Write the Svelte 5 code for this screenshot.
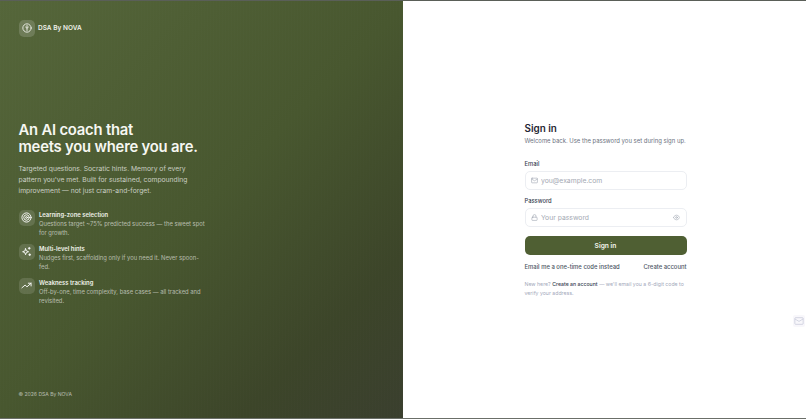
<script lang="ts">
    const features = [
        {
            title: "Learning-zone selection",
            text: "Questions target ~75% predicted success — the sweet spot for growth.",
            icon: "target"
        },
        {
            title: "Multi-level hints",
            text: "Nudges first, scaffolding only if you need it. Never spoon-fed.",
            icon: "sparkles"
        },
        {
            title: "Weakness tracking",
            text: "Off-by-one, time complexity, base cases — all tracked and revisited.",
            icon: "trend"
        }
    ];
</script>

<div class="page">
    <aside class="hero">
        <div class="brand">
            <span class="brand-icon">
                <svg viewBox="0 0 24 24" width="10" height="10" fill="none" stroke="currentColor" stroke-width="2.2" stroke-linecap="round">
                    <circle cx="12" cy="12" r="10" />
                    <path d="M12 6v12M9 9.5c0 2 1.5 2.5 3 2.5s3-.5 3-2.5" />
                </svg>
            </span>
            <span>DSA By NOVA</span>
        </div>

        <div class="pitch">
            <h1>An AI coach that<br />meets you where you are.</h1>
            <p class="lead">Targeted questions. Socratic hints. Memory of every pattern you've met. Built for sustained, compounding improvement — not just cram-and-forget.</p>
            <ul>
                {#each features as f}
                    <li>
                        <span class="feature-icon">
                            <svg viewBox="0 0 24 24" width="11" height="11" fill="none" stroke="currentColor" stroke-width="2" stroke-linecap="round" stroke-linejoin="round">
                                {#if f.icon === "target"}
                                    <circle cx="12" cy="12" r="10" />
                                    <circle cx="12" cy="12" r="6" />
                                    <circle cx="12" cy="12" r="2" />
                                {:else if f.icon === "sparkles"}
                                    <path d="M10 6l1.8 4.7L16.5 12.5l-4.7 1.8L10 19l-1.8-4.7L3.5 12.5l4.7-1.8z" />
                                    <path d="M18 3v4M16 5h4M19 17v4M17 19h4" />
                                {:else}
                                    <path d="M2 17l7-6 4 4 9-8" />
                                    <path d="M16 7h6v6" />
                                {/if}
                            </svg>
                        </span>
                        <div>
                            <div class="feature-title">{f.title}</div>
                            <div class="feature-text">{f.text}</div>
                        </div>
                    </li>
                {/each}
            </ul>
        </div>

        <div class="copyright">© 2026 DSA By NOVA</div>
    </aside>

    <main class="panel">
        <form class="card">
            <h2>Sign in</h2>
            <p class="sub">Welcome back. Use the password you set during sign up.</p>

            <label for="email">Email</label>
            <div class="field">
                <svg viewBox="0 0 24 24" width="7" height="7" fill="none" stroke="currentColor" stroke-width="2" stroke-linecap="round" stroke-linejoin="round">
                    <rect x="2" y="4" width="20" height="16" rx="2" />
                    <path d="M2 7l10 6 10-6" />
                </svg>
                <input id="email" type="email" placeholder="you@example.com" />
            </div>

            <label for="password">Password</label>
            <div class="field">
                <svg viewBox="0 0 24 24" width="7" height="7" fill="none" stroke="currentColor" stroke-width="2" stroke-linecap="round" stroke-linejoin="round">
                    <rect x="3" y="11" width="18" height="11" rx="2" />
                    <path d="M7 11V7a5 5 0 0 1 10 0v4" />
                </svg>
                <input id="password" type="password" placeholder="Your password" />
                <svg class="eye" viewBox="0 0 24 24" width="7" height="7" fill="none" stroke="currentColor" stroke-width="2" stroke-linecap="round" stroke-linejoin="round">
                    <path d="M1 12s4-8 11-8 11 8 11 8-4 8-11 8-11-8-11-8z" />
                    <circle cx="12" cy="12" r="3" />
                </svg>
            </div>

            <button type="button">Sign in</button>

            <div class="links">
                <span>Email me a one-time code instead</span>
                <span>Create account</span>
            </div>

            <div class="note">
                <div class="note-line">
                    <span>New here?</span>
                    <b>Create an account</b>
                    <span>— we'll email you a 6-digit code to</span>
                </div>
                <div>verify your address.</div>
            </div>
        </form>
    </main>

    <div class="widget">
        <svg viewBox="0 0 24 24" width="10" height="10" fill="none" stroke="#c3c6d6" stroke-width="1.6">
            <rect x="2" y="4" width="20" height="16" rx="2" />
            <path d="M2 7l10 6 10-6" />
        </svg>
    </div>
</div>

<style>
    :global(body) {
        margin: 0;
        background: #fff;
        font-family: Inter, "Noto Sans", sans-serif;
    }

    .page {
        position: relative;
        display: grid;
        grid-template-columns: 403px 1fr;
        height: 419px;
        box-sizing: border-box;
        border-top: 1px solid #5a5f58;
        border-bottom: 1px solid #6b6f69;
        overflow: hidden;
    }

    .hero {
        display: flex;
        flex-direction: column;
        justify-content: space-between;
        box-sizing: border-box;
        padding: 19px 19px 20px 18.5px;
        color: #fff;
        background:
            repeating-linear-gradient(90deg, rgba(255, 255, 255, 0.006) 0 1px, transparent 1px 3px),
            linear-gradient(135deg, #55663a 0%, #48572f 50%, #3c4529 80%, #3a3f2e 100%);
    }

    .brand {
        display: flex;
        align-items: center;
        gap: 3px;
        font-size: 6.5px;
        font-weight: 600;
        color: #eef0e8;
    }

    .brand-icon {
        display: flex;
        align-items: center;
        justify-content: center;
        width: 16.5px;
        height: 16.5px;
        border-radius: 5px;
        background: rgba(255, 255, 255, 0.16);
    }

    .pitch {
        width: 188px;
    }

    h1 {
        margin: 0;
        font-size: 14.8px;
        line-height: 17.5px;
        font-weight: 600;
        letter-spacing: -0.2px;
        white-space: nowrap;
        color: #f6f7f2;
    }

    .lead {
        margin: 6.5px 0 0;
        font-size: 6.75px;
        line-height: 11px;
        color: rgba(255, 255, 255, 0.7);
    }

    ul {
        list-style: none;
        margin: 13.5px 0 0;
        padding: 0;
        display: flex;
        flex-direction: column;
        gap: 5.6px;
    }

    li {
        display: flex;
        gap: 4px;
    }

    .feature-icon {
        flex: none;
        display: flex;
        align-items: center;
        justify-content: center;
        width: 16.5px;
        height: 16.5px;
        border-radius: 5px;
        background: rgba(255, 255, 255, 0.13);
    }

    .feature-title {
        font-size: 5.9px;
        line-height: 9px;
        font-weight: 600;
        color: #f0f2ea;
    }

    .feature-text {
        font-size: 5.85px;
        line-height: 9.7px;
        color: rgba(255, 255, 255, 0.6);
    }

    .copyright {
        font-size: 5.05px;
        line-height: 7px;
        color: rgba(255, 255, 255, 0.6);
    }

    .panel {
        display: flex;
        align-items: center;
        justify-content: center;
        padding-left: 2px;
        background: #fff;
    }

    .card {
        width: 162px;
    }

    h2 {
        margin: 0;
        font-size: 9.9px;
        line-height: 14px;
        font-weight: 600;
        color: #1f2533;
    }

    .sub {
        margin: 1px 0 14px;
        font-size: 5.95px;
        line-height: 10px;
        color: #6b7280;
        white-space: nowrap;
    }

    label {
        display: block;
        margin-bottom: 3px;
        font-size: 5.8px;
        line-height: 8px;
        font-weight: 500;
        color: #374151;
    }

    .field {
        display: flex;
        align-items: center;
        gap: 3px;
        box-sizing: border-box;
        height: 19px;
        margin-bottom: 7px;
        padding: 0 5.5px;
        border: 1px solid #eceef2;
        border-radius: 5px;
    }

    .field svg {
        flex: none;
        color: #9ca3af;
    }

    input {
        flex: 1;
        min-width: 0;
        padding: 0;
        border: 0;
        outline: 0;
        font: 400 6.8px Inter, sans-serif;
        color: #1f2533;
    }

    input::placeholder {
        color: #a4a9b3;
    }

    button {
        display: block;
        width: 100%;
        height: 19px;
        margin-top: 9px;
        border: 0;
        border-radius: 5px;
        background: #4f5f33;
        color: #f2f4ec;
        font: 600 6.7px Inter, sans-serif;
    }

    .links {
        display: flex;
        justify-content: space-between;
        margin-top: 6.5px;
        font-size: 5.9px;
        line-height: 9px;
        font-weight: 500;
        color: #4b5563;
    }

    .note {
        margin-top: 9px;
        font-size: 5.2px;
        line-height: 9px;
        color: #a4a9bb;
    }

    .note-line {
        display: flex;
        gap: 1.5px;
        white-space: nowrap;
    }

    .note b {
        font-weight: 500;
        color: #374151;
    }

    .widget {
        position: absolute;
        right: 1px;
        top: 314px;
        display: flex;
        align-items: center;
        justify-content: center;
        width: 12px;
        height: 12px;
        background: #f8f7fb;
        border-radius: 2px;
    }
</style>
